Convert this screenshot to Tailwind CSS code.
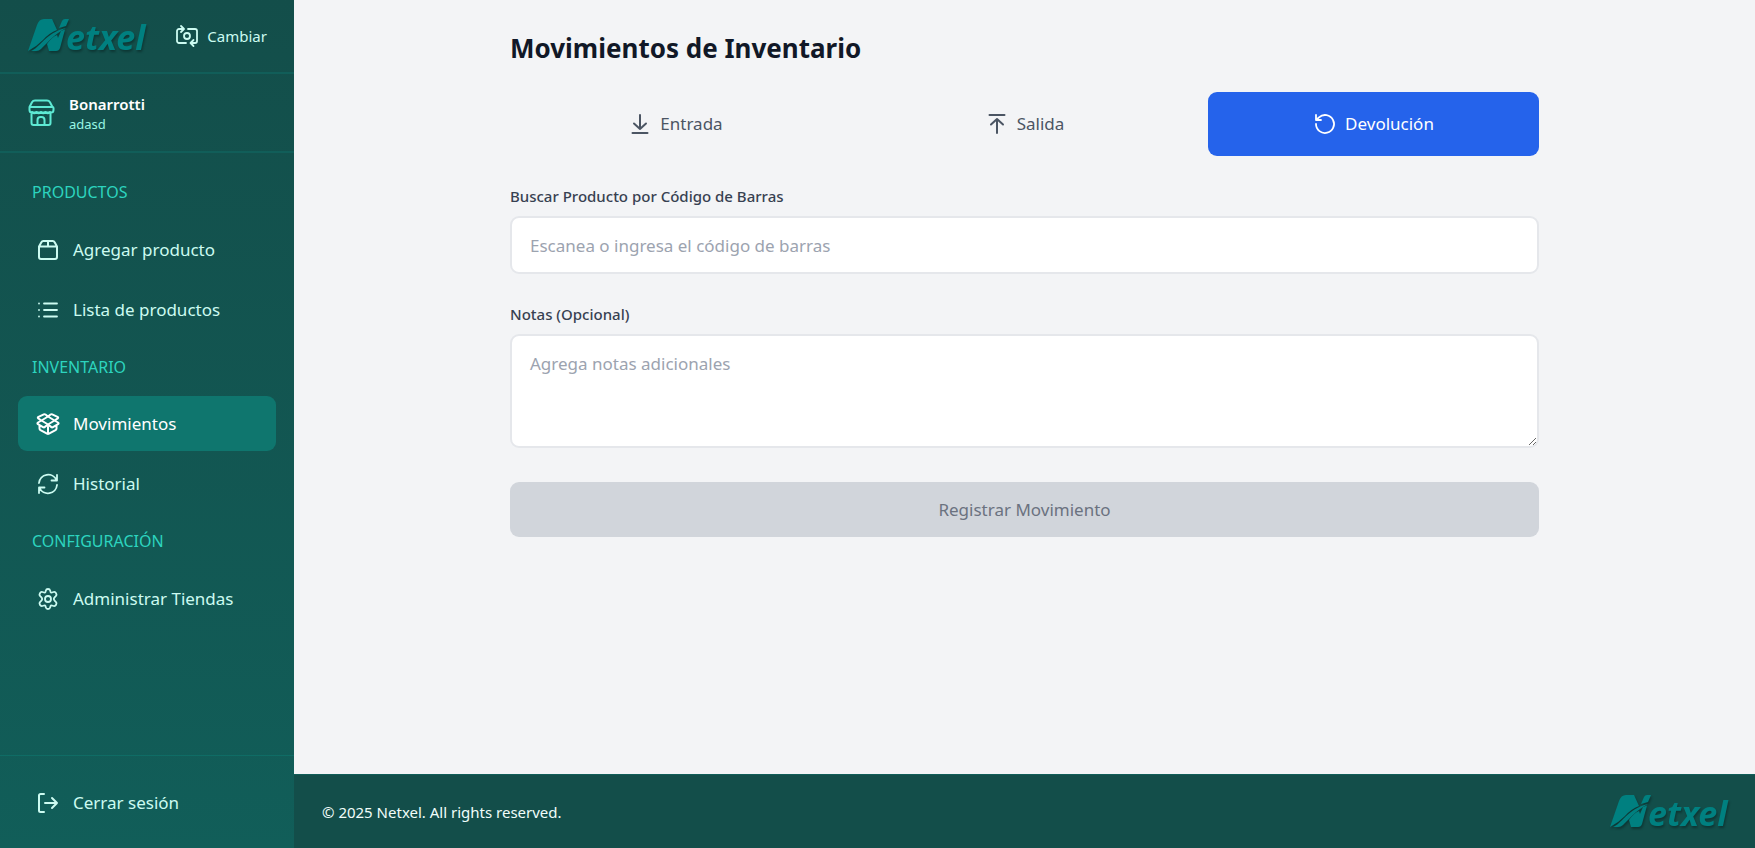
<!DOCTYPE html>
<html lang="es">
<head>
<meta charset="utf-8">
<meta name="viewport" content="width=device-width, initial-scale=1">
<title>Movimientos de Inventario</title>
<script src="https://cdn.jsdelivr.net/npm/@tailwindcss/browser@4"></script>
</head>
<body class="flex min-h-screen bg-[#f3f4f6] font-['Noto_Sans','Open_Sans',sans-serif] text-[17px] leading-7 text-[#4b5563]">

<svg class="hidden" aria-hidden="true">
  <symbol id="logo" viewBox="0 0 120 40">
    <path d="M0 35 L9 9 Q11 3 16 3 H24 L29 14 Q21 17 15 24 Q8 31 0 35 Z" fill="#008080"/>
    <path d="M31 12 L34 5 Q35 3 37 3 H41 L38 10 Z" fill="#008080"/>
    <path d="M3 35 C12 32 17 17 38 12 C28 17 22 24 13 33 Q11 35 8 35 Z" fill="#008080"/>
    <path d="M19 28 Q24 21 29 19 L30 22 L33 15 L37 13.500 L32 32 Q31 35 28 35 H21 Z" fill="#008080"/>
    <text x="38" y="34" fill="#008080" font-family="Noto Sans, Open Sans, sans-serif" font-size="34" font-weight="700" font-style="italic">etxel</text>
  </symbol>
</svg>

<aside class="flex w-[294px] shrink-0 flex-col bg-linear-to-b from-[#134e4a] to-[#115e59] text-[#ccfbf1]">
  <div class="flex h-[74px] items-center justify-between border-b-2 border-[#115e59] pr-[27px] pl-7">
    <svg class="h-10 w-[120px] drop-shadow-[1px_2px_1px_rgba(0,0,0,0.3)]" role="img" aria-label="Netxel"><use href="#logo"/></svg>
    <button class="flex items-center gap-2 text-[15px]">
      <svg class="size-6" viewBox="0 0 24 24" fill="none" stroke="currentColor" stroke-width="1.800" stroke-linecap="round" stroke-linejoin="round"><path d="M11 19H4a2 2 0 0 1-2-2V7a2 2 0 0 1 2-2h4M6 2l3 3-3 3M13 5h7a2 2 0 0 1 2 2v10a2 2 0 0 1-2 2h-4M18.500 16l-3 3 3 3"/><circle cx="12" cy="12" r="3"/></svg>
      Cambiar
    </button>
  </div>

  <div class="flex h-[79px] items-center gap-[13px] border-b-2 border-[#115e59] pl-7">
    <svg class="size-7 text-[#5eead4]" viewBox="0 0 28 28" fill="none" stroke="currentColor" stroke-width="2" stroke-linecap="round" stroke-linejoin="round"><path d="M1.500 8 4 3.300Q5 1.500 7 1.500h12q2 0 3 1.800L24.500 8M1.500 8h23q1 0 1 1v2a2.500 2.500 0 0 1-2.500 2.500H4A2.500 2.500 0 0 1 1.500 11zM3.500 13.500V24a2 2 0 0 0 2 2h15a2 2 0 0 0 2-2V13.500M9.500 26v-5a3 3 0 0 1 3-3h1a3 3 0 0 1 3 3v5"/><path d="M4 13q2.200 2.500 4.500 0 2.200 2.500 4.500 0 2.200 2.500 4.500 0 2.200 2.500 4.500 0"/></svg>
    <div class="flex flex-col pt-0.5">
      <span class="text-[15px] leading-5 font-semibold text-white">Bonarrotti</span>
      <span class="text-[13px] leading-5 text-[#99f6e4]">adasd</span>
    </div>
  </div>

  <nav class="flex grow flex-col px-[18px] pt-[9px]">
    <h2 class="flex h-[60px] items-center px-3.5 text-base text-[#2dd4bf]">PRODUCTOS</h2>
    <div class="flex flex-col gap-[5px]">
      <a href="#" class="flex h-[55px] items-center gap-[13px] rounded-[9px] px-[18px]">
        <svg class="size-6" viewBox="0 0 24 24" fill="none" stroke="currentColor" stroke-width="2" stroke-linecap="round" stroke-linejoin="round"><path d="M3 8.500 5.500 4Q6 3 7.200 3h9.600Q18 3 18.500 4L21 8.500V19a2 2 0 0 1-2 2H5a2 2 0 0 1-2-2zM3 8.500h18M12 3v5.500"/></svg>
        Agregar producto
      </a>
      <a href="#" class="flex h-[55px] items-center gap-[13px] rounded-[9px] px-[18px]">
        <svg class="size-6" viewBox="0 0 24 24" fill="none" stroke="currentColor" stroke-width="1.800" stroke-linecap="round"><path d="M8 5.500h13M8 12h13M8 18.500h13M3 5.500h.01M3 12h.01M3 18.500h.01"/></svg>
        Lista de productos
      </a>
    </div>
    <h2 class="flex h-[59px] items-center px-3.5 text-base text-[#2dd4bf]">INVENTARIO</h2>
    <div class="flex flex-col gap-[5px]">
      <a href="#" aria-current="page" class="flex h-[55px] items-center gap-[13px] rounded-[9px] bg-[#0f766e] px-[18px] text-white">
        <svg class="size-6" viewBox="0 0 24 24" fill="none" stroke="currentColor" stroke-width="2" stroke-linecap="round" stroke-linejoin="round"><path d="M12 15v7M3.500 13.500v3q0 1 1 1.600l6.500 3.600q1 .5 2 0l6.500-3.600q1-.6 1-1.600v-3M12 4.500l6.500 4L12 12.500l-6.500-4zM12 4.500 9.500 2.500q-.8-.6-1.700-.2L2.500 4.800q-1.200.6-.3 1.600l3.300 2.100M12 4.500l2.500-2q.8-.6 1.700-.2l5.300 2.500q1.200.6.3 1.600l-3.300 2.100M5.500 8.500 2 10.500q-1.200.8 0 1.700l5 2.900q1 .6 1.900-.2L12 12.500M18.500 8.500 22 10.500q1.200.8 0 1.700l-5 2.900q-1 .6-1.900-.2L12 12.500"/></svg>
        Movimientos
      </a>
      <a href="#" class="flex h-[55px] items-center gap-[13px] rounded-[9px] px-[18px]">
        <svg class="size-6" viewBox="0 0 24 24" fill="none" stroke="currentColor" stroke-width="1.800" stroke-linecap="round" stroke-linejoin="round"><path d="M3 11A9.200 9.200 0 0 1 20.500 8M21 3v5.500h-5.500M21 13A9.200 9.200 0 0 1 3.500 16M3 21v-5.500h5.500"/></svg>
        Historial
      </a>
    </div>
    <h2 class="flex h-[60px] items-center px-3.5 text-base text-[#2dd4bf]">CONFIGURACIÓN</h2>
    <a href="#" class="flex h-[55px] items-center gap-[13px] rounded-[9px] px-[18px]">
      <svg class="size-6" viewBox="0 0 24 24" fill="none" stroke="currentColor" stroke-width="1.800" stroke-linecap="round" stroke-linejoin="round"><path d="M9.800 3.600C10.100 2.400 10.800 2 12 2s1.900.4 2.200 1.600l.3 1.200q.4 1 1.500.7l1.600-.5c1.100-.3 1.900.1 2.500 1.200.7 1.200.6 2-.2 2.800l-1.100 1.200q-1 1.100-1 1.800t1 1.800l1.100 1.200c.8.8.9 1.600.2 2.800-.6 1.100-1.400 1.500-2.500 1.200l-1.600-.5q-1.100-.3-1.500.7l-.3 1.200C13.900 21.600 13.200 22 12 22s-1.900-.4-2.200-1.600l-.3-1.200q-.4-1-1.500-.7l-1.600.5c-1.100.3-1.900-.1-2.500-1.200-.7-1.200-.6-2 .2-2.800l1.100-1.200q1-1.100 1-1.800t-1-1.800L4.100 9c-.8-.8-.9-1.600-.2-2.800C4.500 5.100 5.300 4.700 6.400 5l1.600.5q1.100.3 1.500-.7z"/><circle cx="12" cy="12" r="3"/></svg>
      Administrar Tiendas
    </a>
  </nav>

  <div class="border-t border-[#0f766e]/60 px-[18px] pt-5 pb-[18px]">
    <button class="flex h-[54px] w-full items-center gap-[13px] rounded-[9px] px-[18px]">
      <svg class="size-6" viewBox="0 0 24 24" fill="none" stroke="currentColor" stroke-width="2" stroke-linecap="round" stroke-linejoin="round"><path d="M8 3H4.500A1.500 1.500 0 0 0 3 4.500v15A1.500 1.500 0 0 0 4.500 21H8M9 12h12M16 7l5 5-5 5"/></svg>
      Cerrar sesión
    </button>
  </div>
</aside>

<div class="flex min-w-0 grow flex-col">
  <main class="grow px-7 pt-7">
    <div class="mx-auto max-w-[1029px]">
      <h1 class="text-[26px] leading-10 font-bold text-[#111827]">Movimientos de Inventario</h1>
      <div class="mt-6 grid grid-cols-3 gap-[18px]">
        <button class="flex h-16 items-center justify-center gap-2 rounded-[9px]">
          <svg class="size-6" viewBox="0 0 24 24" fill="none" stroke="currentColor" stroke-width="2" stroke-linecap="round" stroke-linejoin="round"><path d="M12 3v14M6 11.500l6 5.500 6-5.500M4.500 21h15"/></svg>
          Entrada
        </button>
        <button class="flex h-16 items-center justify-center gap-2 rounded-[9px]">
          <svg class="size-6" viewBox="0 0 24 24" fill="none" stroke="currentColor" stroke-width="2" stroke-linecap="round" stroke-linejoin="round"><path d="M12 21V7M6 12.500 12 7l6 5.500M4.500 3h15"/></svg>
          Salida
        </button>
        <button class="flex h-16 items-center justify-center gap-2 rounded-[9px] bg-[#2563eb] text-white">
          <svg class="size-6" viewBox="0 0 24 24" fill="none" stroke="currentColor" stroke-width="1.800" stroke-linecap="round" stroke-linejoin="round"><path d="M3 12a9 9 0 1 0 3-6.700L3 8M3 3v5h5"/></svg>
          Devolución
        </button>
      </div>

      <form>
        <label for="barcode" class="mt-7 block text-[15px] leading-6 font-medium text-[#374151]">Buscar Producto por Código de Barras</label>
        <input id="barcode" type="text" placeholder="Escanea o ingresa el código de barras" class="mt-2 block h-[58px] w-full rounded-[9px] border-2 border-[#e5e7eb] bg-white px-[18px] placeholder:text-[#9ca3af]">
        <label for="notes" class="mt-7 block text-[15px] leading-6 font-medium text-[#374151]">Notas (Opcional)</label>
        <textarea id="notes" rows="3" placeholder="Agrega notas adicionales" class="mt-2 block h-[114px] w-full rounded-[9px] border-2 border-[#e5e7eb] bg-white px-[18px] py-3.5 placeholder:text-[#9ca3af]"></textarea>
        <button type="button" disabled class="mt-[34px] h-[55px] w-full rounded-[9px] bg-[#d1d5db] text-[#6b7280]">Registrar Movimiento</button>
      </form>
    </div>
  </main>
  <footer class="flex h-[74px] items-center justify-between border-t border-[#115e59] bg-[#134e4a] pr-[25px] pl-7 text-[#f0fdfa]">
    <p class="text-[15px]">© 2025 Netxel. All rights reserved.</p>
    <svg class="h-10 w-[120px] drop-shadow-[1px_2px_1px_rgba(0,0,0,0.3)]" role="img" aria-label="Netxel"><use href="#logo"/></svg>
  </footer>
</div>
</body>
</html>
